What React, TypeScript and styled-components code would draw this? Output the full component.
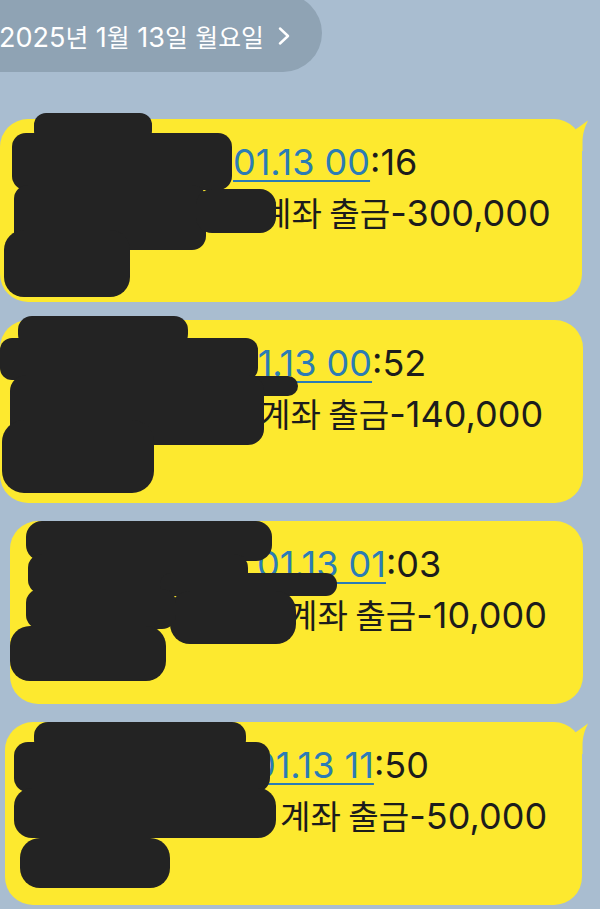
import React from "react";
import styled, { createGlobalStyle } from "styled-components";

const Global = createGlobalStyle`
  html, body { margin: 0; padding: 0; background: #a9bdd0; }
  body { width: 600px; height: 909px; overflow: hidden; }
`;

const Page = styled.div`
  width: 600px;
  height: 909px;
  overflow: hidden;
  display: flex;
  flex-direction: column;
  background: #a9bdd0;
  font-family: Inter, "Noto Sans", "Noto Sans CJK KR", sans-serif;
`;

const DatePill = styled.div`
  align-self: flex-start;
  display: flex;
  align-items: center;
  gap: 14px;
  height: 78px;
  box-sizing: border-box;
  margin: -6px 0 0 -40px;
  padding: 6px 32px 0 39px;
  border-radius: 39px;
  background: #8fa3b4;
  color: #ffffff;
  font-size: 27px;
  white-space: nowrap;
`;

const Ko = styled.span`
  font-family: "Noto Sans CJK KR", sans-serif;
  font-size: 0.92em;
`;

const Chevron = styled.svg`
  width: 12px;
  height: 18px;
  flex: none;
`;

const Messages = styled.div`
  display: flex;
  flex-direction: column;
  gap: 18px;
  margin-top: 47px;
`;

const Bubble = styled.div<{ $left: number; $right: number }>`
  position: relative;
  box-sizing: border-box;
  height: 183px;
  margin: 0 ${(p) => p.$right}px 0 ${(p) => p.$left}px;
  padding: 18px 0 0 20px;
  background: #fde92f;
  border-radius: 28px;
  color: #1c1c1c;
  font-size: 36px;
`;

const Line = styled.div`
  height: 50px;
  line-height: 50px;
  white-space: nowrap;
`;

const Redacted = styled.span<{ $w: number }>`
  display: inline-block;
  width: ${(p) => p.$w}px;
`;

const DateLink = styled.span`
  color: #2b7cb5;
  text-decoration: underline;
  text-decoration-color: #2b7cb5;
  text-decoration-thickness: 2px;
  text-underline-offset: 5px;
`;

const Scribble = styled.svg`
  position: absolute;
  left: 0;
  top: 0;
  width: 100%;
  height: 100%;
  overflow: visible;
  pointer-events: none;
`;

const Tail = styled.svg`
  position: absolute;
  top: 0;
  right: -8px;
  width: 20px;
  height: 32px;
  overflow: visible;
`;

type R = [number, number, number, number, number];

type Msg = {
  left: number;
  right: number;
  tail: boolean;
  g1: number;
  g2: number;
  link: string;
  rest: string;
  amount: string;
  marks: R[];
};

const messages: Msg[] = [
  {
    left: 0,
    right: 18,
    tail: true,
    g1: 213,
    g2: 241,
    link: "01.13 00",
    rest: ":16",
    amount: "-300,000",
    marks: [
      [34, -6, 118, 30, 12],
      [12, 14, 220, 57, 14],
      [14, 66, 192, 65, 14],
      [196, 70, 80, 44, 16],
      [4, 111, 126, 67, 20],
    ],
  },
  {
    left: 0,
    right: 17,
    tail: false,
    g1: 215,
    g2: 240,
    link: "01.13 00",
    rest: ":52",
    amount: "-140,000",
    marks: [
      [18, -4, 170, 32, 14],
      [0, 18, 258, 42, 12],
      [196, 56, 102, 20, 10],
      [10, 55, 254, 70, 16],
      [2, 100, 152, 73, 22],
    ],
  },
  {
    left: 10,
    right: 17,
    tail: false,
    g1: 227,
    g2: 257,
    link: "01.13 01",
    rest: ":03",
    amount: "-10,000",
    marks: [
      [16, 0, 246, 40, 16],
      [18, 33, 220, 40, 14],
      [150, 52, 177, 23, 11],
      [160, 70, 126, 53, 20],
      [16, 68, 150, 40, 14],
      [0, 105, 156, 55, 20],
    ],
  },
  {
    left: 5,
    right: 18,
    tail: true,
    g1: 228,
    g2: 255,
    link: "01.13 11",
    rest: ":50",
    amount: "-50,000",
    marks: [
      [29, 0, 212, 32, 14],
      [9, 20, 256, 50, 14],
      [9, 66, 262, 50, 18],
      [15, 116, 150, 50, 20],
    ],
  },
];

export default function App() {
  return (
    <Page>
      <Global />
      <DatePill>
        <span>
          2025<Ko>년</Ko> 1<Ko>월</Ko> 13<Ko>일</Ko> <Ko>월요일</Ko>
        </span>
        <Chevron viewBox="0 0 12 18">
          <polyline
            points="2,1.5 10,9 2,16.5"
            fill="none"
            stroke="#ffffff"
            strokeWidth="2.4"
            strokeLinecap="round"
            strokeLinejoin="round"
          />
        </Chevron>
      </DatePill>
      <Messages>
        {messages.map((m, i) => (
          <Bubble key={i} $left={m.left} $right={m.right}>
            <Line>
              <Redacted $w={m.g1} aria-hidden="true" />
              <DateLink>{m.link}</DateLink>
              {m.rest}
            </Line>
            <Line>
              <Redacted $w={m.g2} aria-hidden="true" />
              <Ko>계좌 출금</Ko>
              {m.amount}
            </Line>
            <Line>
              <Redacted $w={100} aria-hidden="true" />
            </Line>
            {m.tail && (
              <Tail viewBox="0 0 20 32">
                <path
                  d="M0 14 C 6 10, 12 6, 18 1.5 C 15 8, 12.5 14, 12.5 24 L 12.5 32 L 0 32 Z"
                  fill="#fde92f"
                />
              </Tail>
            )}
            <Scribble>
              {m.marks.map(([x, y, w, h, r], j) => (
                <rect key={j} x={x} y={y} width={w} height={h} rx={r} fill="#232323" />
              ))}
            </Scribble>
          </Bubble>
        ))}
      </Messages>
    </Page>
  );
}
